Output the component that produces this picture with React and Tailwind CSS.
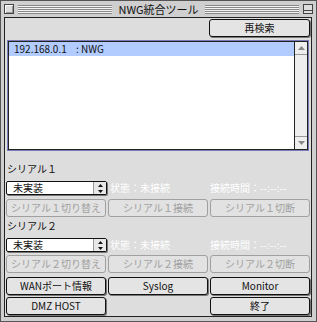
const font = { fontFamily: '"Noto Sans CJK JP", "Liberation Sans", sans-serif' };

function Btn({ children, disabled, className = "" }) {
  return (
    <div
      className={
        "flex items-center justify-center rounded-[3px] border text-[10px] leading-none " +
        (disabled
          ? "border-[#a0a0a0] bg-[#e2e2e2] text-[#a0a0a0] "
          : "border-[#111] bg-[#e4e4e4] text-[#111] shadow-[1px_1px_0_#777] ") +
        className
      }
    >
      {children}
    </div>
  );
}

function Popup() {
  return (
    <div className="flex h-[14px] w-[101px] items-stretch rounded-[2px] border border-[#111] bg-white shadow-[1px_1px_0_#777]">
      <div className="flex flex-1 items-center pl-[6px] text-[10px] leading-none text-[#111]">未実装</div>
      <div className="flex w-[13px] items-center justify-center border-l border-[#999] bg-[#e8e8e8]">
        <svg width="5" height="9" viewBox="0 0 5 9">
          <path d="M2.5 0 L5 3 L0 3 Z M2.5 9 L5 6 L0 6 Z" fill="#111" />
        </svg>
      </div>
    </div>
  );
}

function Serial({ n, labelTop, btnTop }) {
  return (
    <div className="flex flex-col">
      <div className={"h-[12px] pl-[1px] text-[10px] leading-[12px] text-[#111] " + labelTop}>シリアル{n}</div>
      <div className="mt-[6px] grid grid-cols-3 items-center gap-[2px]">
        <Popup />
        <div className="pl-[2px] text-[10px] leading-none text-white">状態：未接続</div>
        <div className="text-[10px] leading-none text-white">接続時間：--:--:--</div>
      </div>
      <div className={"grid h-[18px] grid-cols-3 gap-[2px] " + btnTop}>
        <Btn disabled>シリアル{n}切り替え</Btn>
        <Btn disabled>シリアル{n}接続</Btn>
        <Btn disabled>シリアル{n}切断</Btn>
      </div>
    </div>
  );
}

export default function App() {
  return (
    <div style={font} className="h-[322px] w-[317px] border border-[#555] bg-[#cfcfcf] select-none">
      {/* title bar */}
      <div className="flex h-[16px] items-center px-[3px]">
        <div className="h-[10px] w-[10px] border border-[#444] bg-[#ddd] shadow-[inset_1px_1px_0_#fff,inset_-1px_-1px_0_#999]" />
        <div className="mx-[4px] h-[9px] flex-1 bg-[repeating-linear-gradient(to_bottom,#888_0,#888_1px,#f4f4f4_1px,#f4f4f4_2px)]" />
        <div className="px-[2px] text-[11px] leading-none text-[#111]">NWG統合ツール</div>
        <div className="mx-[4px] h-[9px] flex-1 bg-[repeating-linear-gradient(to_bottom,#888_0,#888_1px,#f4f4f4_1px,#f4f4f4_2px)]" />
        <div className="flex h-[10px] w-[10px] items-center justify-center border border-[#444] bg-[#ddd]">
          <div className="h-[4px] w-[8px] border-b border-[#444]" />
        </div>
      </div>
      {/* content */}
      <div className="ml-[3px] mr-[4px] h-[300px] border border-[#222] bg-[#dddddd] px-[1px]">
        <div className="flex justify-end pt-[1px]">
          <Btn className="h-[18px] w-[101px]">再検索</Btn>
        </div>
        <div className="ml-[1px] mt-[3px] h-[111px] w-[302px] border border-[#7a7ab8]">
          <div className="flex h-full border border-[#222] bg-white">
            <div className="flex-1">
              <div className="flex h-[14px] items-center bg-[#b3ccff] pl-[5px] text-[10px] leading-none text-[#111]">
                <span className="w-[62px]">192.168.0.1</span>
                <span>: NWG</span>
              </div>
            </div>
            <div className="flex w-[13px] flex-col justify-between border-l border-[#222] bg-[#eeeeee]">
              <div className="flex h-[13px] items-center justify-center border-b border-[#999]">
                <svg width="7" height="4" viewBox="0 0 7 4"><path d="M3.5 0 L7 4 L0 4 Z" fill="#888" /></svg>
              </div>
              <div className="flex h-[13px] items-center justify-center border-t border-[#999]">
                <svg width="7" height="4" viewBox="0 0 7 4"><path d="M0 0 L7 0 L3.5 4 Z" fill="#888" /></svg>
              </div>
            </div>
          </div>
        </div>
        <Serial n="１" labelTop="mt-[12px]" btnTop="mt-[4px]" />
        <Serial n="２" labelTop="mt-[3px]" btnTop="mt-[3px]" />
        <div className="mt-[4px] grid h-[18px] grid-cols-3 gap-[2px]">
          <Btn>WANポート情報</Btn>
          <Btn>Syslog</Btn>
          <Btn>Monitor</Btn>
        </div>
        <div className="mt-[2px] grid h-[18px] grid-cols-3 gap-[2px]">
          <Btn>DMZ HOST</Btn>
          <div />
          <Btn>終了</Btn>
        </div>
      </div>
    </div>
  );
}
